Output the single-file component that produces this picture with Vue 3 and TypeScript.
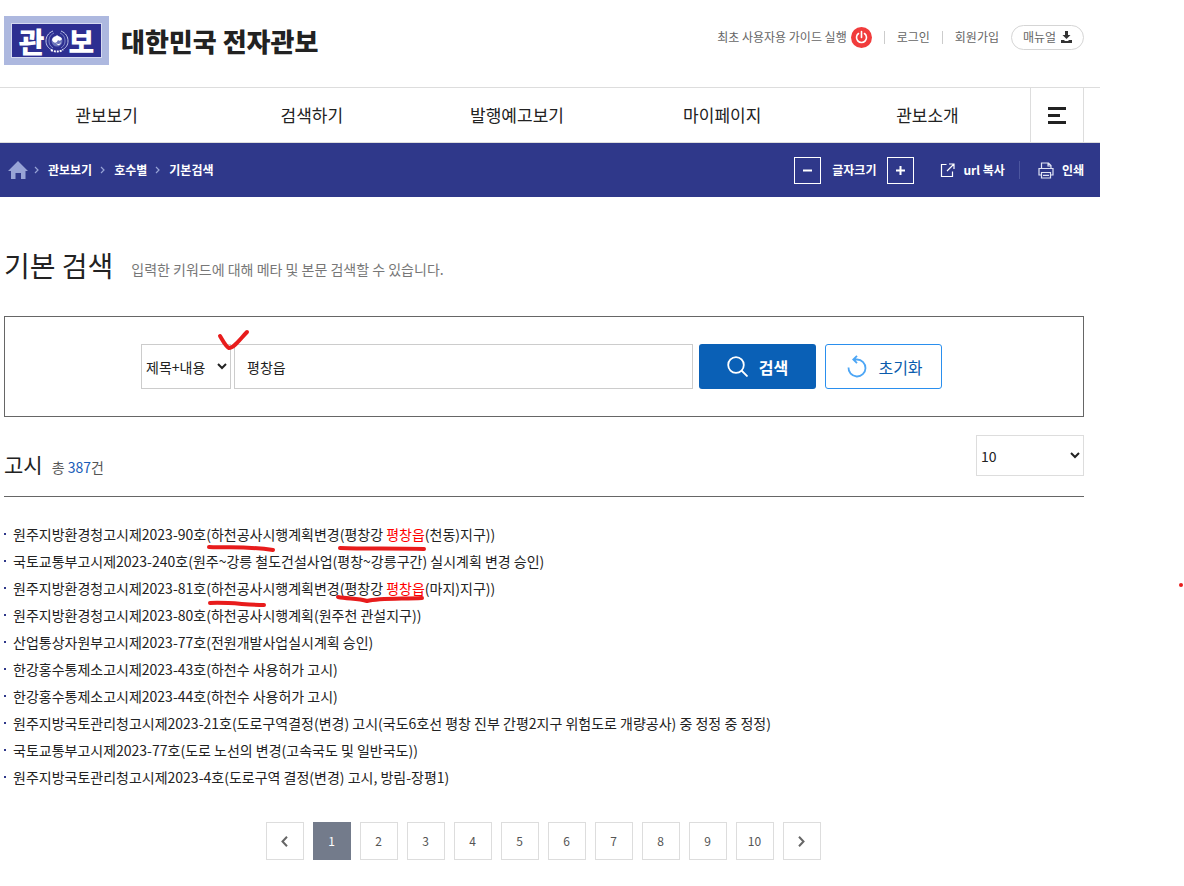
<script setup lang="ts">
import { ref } from 'vue'

interface Segment {
  text: string
  hit?: boolean
}

const menus: string[] = ['관보보기', '검색하기', '발행예고보기', '마이페이지', '관보소개']
const crumbs: string[] = ['관보보기', '호수별', '기본검색']

const notices: Segment[][] = [
  [{ text: '원주지방환경청고시제2023-90호(하천공사시행계획변경(평창강 ' }, { text: '평창읍', hit: true }, { text: '(천동)지구))' }],
  [{ text: '국토교통부고시제2023-240호(원주~강릉 철도건설사업(평창~강릉구간) 실시계획 변경 승인)' }],
  [{ text: '원주지방환경청고시제2023-81호(하천공사시행계획변경(평창강 ' }, { text: '평창읍', hit: true }, { text: '(마지)지구))' }],
  [{ text: '원주지방환경청고시제2023-80호(하천공사시행계획(원주천 관설지구))' }],
  [{ text: '산업통상자원부고시제2023-77호(전원개발사업실시계획 승인)' }],
  [{ text: '한강홍수통제소고시제2023-43호(하천수 사용허가 고시)' }],
  [{ text: '한강홍수통제소고시제2023-44호(하천수 사용허가 고시)' }],
  [{ text: '원주지방국토관리청고시제2023-21호(도로구역결정(변경) 고시(국도6호선 평창 진부 간평2지구 위험도로 개량공사) 중 정정 중 정정)' }],
  [{ text: '국토교통부고시제2023-77호(도로 노선의 변경(고속국도 및 일반국도))' }],
  [{ text: '원주지방국토관리청고시제2023-4호(도로구역 결정(변경) 고시, 방림-장평1)' }],
]

const scope = ref('all')
const keyword = ref('평창읍')
const pageSize = ref('10')
const current = ref(1)

function reset(): void {
  scope.value = 'all'
  keyword.value = ''
}
</script>

<template>
  <div class="page">
    <header>
      <div class="top">
        <a href="#" class="brand">
          <span class="badge">
            <span class="badge-in">
              <span>관</span>
              <svg class="emblem" viewBox="0 0 24 24" aria-hidden="true">
                <g fill="none" stroke="#c3c9ea">
                  <path d="M8 2C3 4 1 8 1 12s2 7 6 9M16 2c5 2 7 6 7 10s-2 7-6 9" />
                  <path d="M9 4C5 6 4 9 4 12s1 5 4 7M15 4c4 2 5 5 5 8s-1 5-4 7" stroke="#8089c8" />
                </g>
                <path d="M6 21c4 2 8 2 12 0" stroke="#fff" stroke-width="2" stroke-dasharray="2 1" fill="none" />
                <circle cx="12" cy="12" r="5.500" fill="#6a74ba" />
                <path d="M7 11c1-4 4-3 5-5 1 2 4 1 5 4-1 2-3 2-4 1-1 3-4 4-6 0Z" fill="#fff" />
                <path d="M11 14c2 2 4 1 5-1-1 4-3 4-5 1Z" fill="#fff" />
              </svg>
              <span>보</span>
            </span>
          </span>
          <span class="brand-name">대한민국 전자관보</span>
        </a>
        <div class="util">
          <a href="#" class="guide">최초 사용자용 가이드 실행
            <svg width="21" height="21" viewBox="0 0 21 21" aria-hidden="true">
              <circle cx="10.500" cy="10.500" r="10.500" fill="#f13c3c" />
              <path d="M7.500 6.500a5 5 0 1 0 6 0M10.500 4.500v6" fill="none" stroke="#fff" stroke-width="1.600" stroke-linecap="round" />
            </svg>
          </a>
          <i class="bar"></i>
          <a href="#">로그인</a>
          <i class="bar"></i>
          <a href="#">회원가입</a>
          <a href="#" class="manual">매뉴얼
            <svg width="11" height="12" viewBox="0 0 11 12" aria-hidden="true">
              <path d="M4 0h3v4h2.500l-4 4-4-4H4zM0 9h3l1 1h3l1-1h3v3H0z" fill="#333" />
            </svg>
          </a>
        </div>
      </div>
      <nav class="gnb">
        <a v-for="m in menus" :key="m" href="#">{{ m }}</a>
        <button type="button" class="all" aria-label="전체메뉴">
          <svg width="18" height="17" viewBox="0 0 18 17"><path d="M0 0h18v3H0zM0 7h12v3H0zM0 14h18v3H0z" fill="#222" /></svg>
        </button>
      </nav>
    </header>

    <div class="location">
      <a href="#" class="home" aria-label="홈">
        <svg width="20" height="18" viewBox="0 0 20 18"><path d="M10 0 20 10h-2.500v8H13v-6H7.500v6H3v-8H0z" fill="#98a4d6" /></svg>
      </a>
      <template v-for="c in crumbs" :key="c">
        <svg class="sep" width="5" height="8" viewBox="0 0 5 8" aria-hidden="true"><path d="m1 1 3 3-3 3" fill="none" stroke="#98a4d6" stroke-width="1.200" /></svg>
        <a href="#" class="crumb">{{ c }}</a>
      </template>
      <div class="tools">
        <button type="button" class="size" aria-label="작게">
          <svg width="9" height="9" viewBox="0 0 9 9"><path d="M0 4.500h9" stroke="#fff" stroke-width="2" /></svg>
        </button>
        <span class="size-name">글자크기</span>
        <button type="button" class="size" aria-label="크게">
          <svg width="9" height="9" viewBox="0 0 9 9"><path d="M0 4.500h9M4.500 0v9" stroke="#fff" stroke-width="2" /></svg>
        </button>
        <button type="button" class="tool copy">
          <svg width="15" height="15" viewBox="0 0 15 15" fill="none" stroke="#fff" stroke-width="1.200"><path d="M6.500 1.500h-5v12h11v-5M9 1h5v5M14 1 7 8" /></svg>
          url 복사
        </button>
        <i class="tool-bar"></i>
        <button type="button" class="tool">
          <svg width="16" height="17" viewBox="0 0 16 17" fill="none" stroke="#e0e3f4" stroke-width="1.200"><path d="M3.500 6V1h7l2.500 2.500V6M10 1v3h3M3 13H1V6.500h14V13h-2M3.500 10.500h9v5.500h-9zM5 13.300h6" /></svg>
          인쇄
        </button>
      </div>
    </div>

    <main>
      <div class="title">
        <h1>기본 검색</h1>
        <p>입력한 키워드에 대해 메타 및 본문 검색할 수 있습니다.</p>
      </div>

      <form class="search" @submit.prevent>
        <select v-model="scope" class="scope" aria-label="검색 범위">
          <option value="all">제목+내용</option>
          <option value="title">제목</option>
        </select>
        <input v-model="keyword" type="text" aria-label="검색어" />
        <button type="submit" class="go">
          <svg width="21" height="21" viewBox="0 0 21 21" fill="none" stroke="#fff" stroke-width="1.800"><circle cx="9" cy="9" r="7.800" /><path d="m14.500 14.500 6 6" /></svg>
          검색
        </button>
        <button type="button" class="reset" @click="reset">
          <svg width="20" height="23" viewBox="0 0 20 23" fill="none" stroke="#4da6f5" stroke-width="1.800"><path d="M1.500 12.500A8.500 8.500 0 1 0 10 4.500H6.500M10 .8 6.300 4.500l3.700 3.700" /></svg>
          초기화
        </button>
      </form>

      <div class="result-head">
        <h2>고시</h2>
        <p>총 <strong>387</strong>건</p>
        <select v-model="pageSize" class="count" aria-label="목록 개수">
          <option>10</option>
          <option>20</option>
          <option>50</option>
        </select>
      </div>

      <ul class="list">
        <li v-for="(n, i) in notices" :key="i">
          <a href="#"><template v-for="(s, j) in n" :key="j"><em v-if="s.hit">{{ s.text }}</em><template v-else>{{ s.text }}</template></template></a>
        </li>
      </ul>

      <nav class="paging" aria-label="페이지">
        <button type="button" aria-label="이전">
          <svg width="7" height="11" viewBox="0 0 7 11"><path d="M6 .8 1.500 5.500 6 10.200" fill="none" stroke="#666" stroke-width="2" /></svg>
        </button>
        <button v-for="p in 10" :key="p" type="button" :class="{ on: p === current }" @click="current = p">{{ p }}</button>
        <button type="button" aria-label="다음">
          <svg width="7" height="11" viewBox="0 0 7 11"><path d="M1 .8 5.500 5.500 1 10.200" fill="none" stroke="#666" stroke-width="2" /></svg>
        </button>
      </nav>
    </main>

    <svg class="pen" aria-hidden="true">
      <g fill="none" stroke="#e81c1c" stroke-width="4" stroke-linecap="round" stroke-linejoin="round">
        <path d="M220 336c3 5 6 11 9 12 5 0 12-10 18-16" />
        <path d="M209 547c22 1 38-1 64 3" />
        <path d="M340 548c26 1 56 0 84 1" />
        <path d="M210 603c20-1 36 2 54 2" />
        <path d="M338 597c10 2 20 1 29 4 12-3 34-2 55-3" />
      </g>
      <circle cx="1181" cy="585" r="2" fill="#e81c1c" />
    </svg>
  </div>
</template>

<style>
body {
  margin: 0;
  background: #fff;
}
</style>

<style scoped>
.page {
  position: relative;
  box-sizing: border-box;
  min-height: 100vh;
  padding-right: 84px;
  color: #222;
  font-family: "Noto Sans CJK KR", "Noto Sans", sans-serif;
  font-size: 14px;
  line-height: 20px;
}
.page * {
  box-sizing: border-box;
}
a {
  color: inherit;
  text-decoration: none;
}
button,
input,
select {
  font: inherit;
  color: inherit;
}
button {
  display: flex;
  align-items: center;
  justify-content: center;
  padding: 0;
  border: 0;
  background: none;
  cursor: pointer;
}
h1,
h2,
p,
ul {
  margin: 0;
  padding: 0;
  font-weight: 400;
}
svg {
  flex: none;
}
.top {
  display: flex;
  align-items: flex-start;
  justify-content: space-between;
  height: 87px;
  padding: 16px 16px 0 4px;
}
.brand {
  display: flex;
  align-items: center;
  gap: 12px;
  height: 49px;
}
.badge {
  padding: 7px;
  background: #adb8df;
}
.badge-in {
  display: flex;
  align-items: center;
  justify-content: center;
  width: 91px;
  height: 35px;
  border: 1px solid #d5daf0;
  background: #2d2f91;
  color: #fff;
  font-size: 28px;
  font-weight: 900;
  line-height: 32px;
}
.emblem {
  width: 24px;
  height: 24px;
}
.brand-name {
  font-size: 26px;
  font-weight: 900;
  line-height: 36px;
}
.util {
  display: flex;
  align-items: center;
  height: 42px;
  color: #666;
  font-size: 12px;
}
.guide {
  display: flex;
  align-items: center;
  gap: 4px;
}
.bar {
  width: 1px;
  height: 13px;
  margin: 0 12px;
  background: #ccc;
}
.manual {
  display: flex;
  align-items: center;
  justify-content: center;
  gap: 5px;
  width: 73px;
  height: 25px;
  margin-left: 12px;
  border: 1px solid #d5d5d5;
  border-radius: 13px;
}
.gnb {
  display: flex;
  height: 56px;
  padding: 0 16px 0 4px;
  border-top: 1px solid #ddd;
  border-bottom: 1px solid #ddd;
  font-size: 17px;
  line-height: 54px;
}
.gnb a {
  flex: 1;
  text-align: center;
}
.all {
  width: 54px;
  border: solid #ddd;
  border-width: 0 1px;
}
.location {
  display: flex;
  align-items: center;
  height: 54px;
  padding: 0 16px 0 8px;
  background: #2f388a;
  color: #fff;
  font-size: 12px;
  font-weight: 700;
}
.home {
  display: flex;
}
.sep {
  margin: 0 9px 0 8px;
}
.home + .sep {
  margin-left: 6px;
}
.tools {
  display: flex;
  align-items: center;
  margin-left: auto;
}
.size {
  width: 27px;
  height: 27px;
  border: 1px solid #fff;
}
.size-name {
  margin: 0 11px;
}
.tool {
  gap: 8px;
}
.copy {
  margin-left: 26px;
}
.tool-bar {
  width: 1px;
  height: 18px;
  margin: 0 18px 0 14px;
  background: #4c569f;
}
main {
  padding: 48px 16px 0 4px;
}
.title {
  display: flex;
  align-items: flex-end;
  gap: 18px;
}
h1 {
  font-size: 28px;
  line-height: 40px;
}
.title p {
  color: #777;
  line-height: 32px;
}
.search {
  display: flex;
  margin-top: 31px;
  padding: 27px 136px;
  border: 1px solid #666;
}
.search > * {
  height: 45px;
}
.scope {
  width: 90px;
  margin-right: 3px;
  border: 1px solid #ccc;
  border-radius: 0;
  background: #fff;
}
.search input {
  flex: 0 1 459px;
  min-width: 0;
  margin-right: 6px;
  padding: 0 12px;
  border: 1px solid #ccc;
  outline: 0;
}
.go,
.reset {
  gap: 11px;
  width: 117px;
  border-radius: 3px;
}
.go {
  margin-right: 9px;
  background: #0a60b6;
  color: #fff;
  font-size: 16px;
  font-weight: 700;
}
.reset {
  padding-left: 3px;
  border: 1px solid #2a8fee;
  color: #0a5cad;
  font-size: 16px;
}
.result-head {
  display: flex;
  align-items: baseline;
  gap: 9px;
  height: 80px;
  padding-top: 18px;
  border-bottom: 1px solid #666;
}
h2 {
  font-size: 21px;
  line-height: 58px;
}
.result-head p {
  color: #555;
}
.result-head strong {
  color: #1a5cb8;
  font-weight: 400;
}
.count {
  align-self: flex-start;
  width: 108px;
  height: 41px;
  margin-left: auto;
  border: 1px solid #ddd;
  border-radius: 0;
  background: #fff;
}
.list {
  padding-top: 24px;
  list-style: none;
}
.list li {
  display: flex;
  align-items: center;
  gap: 7px;
  line-height: 27px;
}
.list li::before {
  width: 2px;
  height: 2px;
  margin-bottom: 2px;
  background: #2f388a;
  content: "";
}
em {
  color: #f00;
  font-style: normal;
}
.paging {
  display: flex;
  justify-content: center;
  gap: 9px;
  padding: 31px 2px 26px 0;
}
.paging button {
  width: 38px;
  height: 38px;
  border: 1px solid #ddd;
  color: #555;
  font-size: 12px;
}
.paging .on {
  border-color: #737b8b;
  background: #737b8b;
  color: #fff;
}
.pen {
  position: absolute;
  top: 0;
  left: 0;
  width: 100%;
  height: 100%;
  pointer-events: none;
}
</style>
